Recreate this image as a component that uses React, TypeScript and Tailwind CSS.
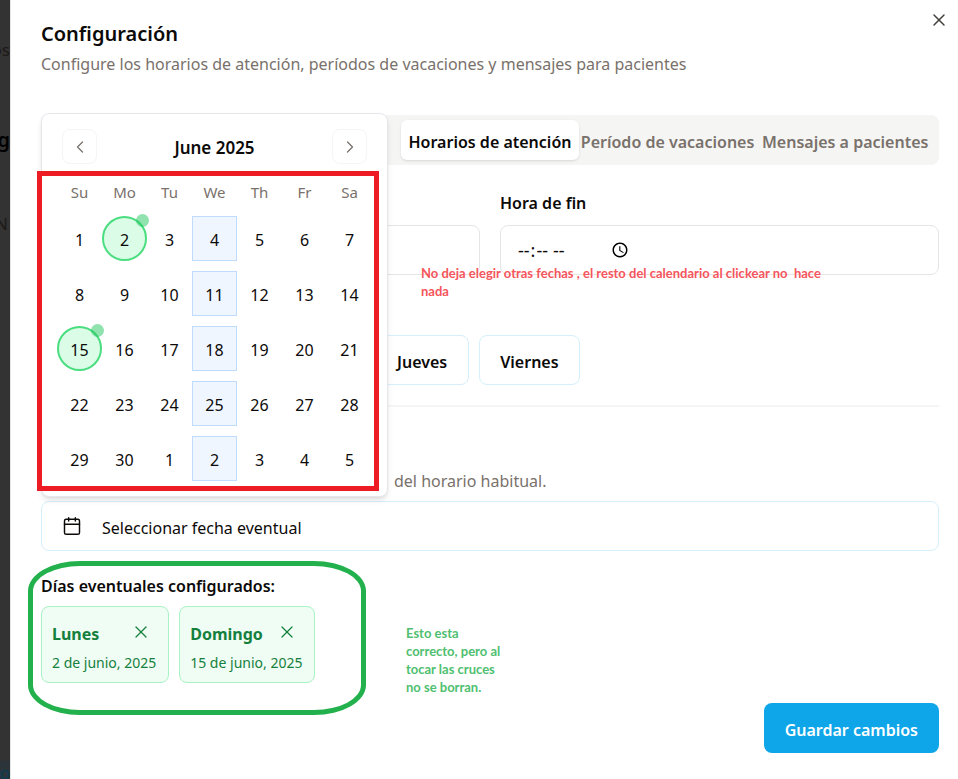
import type { ReactNode } from 'react';
import { Calendar, ChevronLeft, ChevronRight, X } from 'lucide-react';

const weekDays = ['Su', 'Mo', 'Tu', 'We', 'Th', 'Fr', 'Sa'];

const weeks = [
  [1, 2, 3, 4, 5, 6, 7],
  [8, 9, 10, 11, 12, 13, 14],
  [15, 16, 17, 18, 19, 20, 21],
  [22, 23, 24, 25, 26, 27, 28],
  [29, 30, 1, 2, 3, 4, 5],
];

const eventualDays = [
  { name: 'Lunes', date: '2 de junio, 2025' },
  { name: 'Domingo', date: '15 de junio, 2025' },
];

function DayButton({ day, week, column }: { day: number; week: number; column: number }) {
  const configured = (week === 0 && day === 2) || day === 15;
  const workday = column === 3;
  const look = configured
    ? 'rounded-full border-2 border-[#4ade80] bg-green-100'
    : workday
      ? 'border border-[#bfdbfe] bg-[#eff6ff]'
      : '';
  return (
    <button type="button" className={`relative flex h-[45px] w-full items-center justify-center pt-[2px] ${look}`}>
      {day}
      {configured && <span className="absolute -top-1 -right-1 size-[13px] rounded-full bg-[#22c55e]/50" />}
    </button>
  );
}

function MonthCalendar() {
  return (
    <div className="absolute top-[113px] left-[30px] z-10 w-[347px] rounded-lg border border-gray-200 bg-white p-[15px] shadow-md">
      <div className="flex items-center justify-between px-[5px]">
        <button type="button" aria-label="Previous month" className="flex size-[35px] items-center justify-center rounded-lg border border-stone-100 text-stone-500">
          <ChevronLeft size={20} strokeWidth={1.5} />
        </button>
        <h3 className="pt-[2px] text-[17px] leading-6 font-semibold">June 2025</h3>
        <button type="button" aria-label="Next month" className="flex size-[35px] items-center justify-center rounded-lg border border-stone-100 text-stone-500">
          <ChevronRight size={20} strokeWidth={1.5} />
        </button>
      </div>
      <table className="mt-4 block text-[16px]">
        <thead className="block">
          <tr className="flex">
            {weekDays.map((name) => (
              <th key={name} className="w-[45px] text-[15px] leading-6 font-normal text-stone-500">{name}</th>
            ))}
          </tr>
        </thead>
        <tbody className="block">
          {weeks.map((days, week) => (
            <tr key={week} className={week === 0 ? 'mt-3 flex' : 'mt-[10px] flex'}>
              {days.map((day, column) => (
                <td key={column} className="w-[45px]">
                  <DayButton day={day} week={week} column={column} />
                </td>
              ))}
            </tr>
          ))}
        </tbody>
      </table>
    </div>
  );
}

function Tab({ active, className, children }: { active?: boolean; className?: string; children: ReactNode }) {
  return (
    <button
      type="button"
      role="tab"
      aria-selected={!!active}
      className={`flex h-10 items-center justify-center rounded-md pt-1 whitespace-nowrap ${active ? 'bg-white text-stone-950 shadow-sm' : 'text-stone-500'} ${className ?? ''}`}
    >
      {children}
    </button>
  );
}

function Annotations() {
  return (
    <>
      <div className="pointer-events-none absolute top-[171px] left-[26px] z-20 h-[320px] w-[342px] border-[5px] border-[#ed1c24]" />
      <div className="pointer-events-none absolute top-[561px] left-[17px] z-20 h-[154px] w-[338px] rounded-[52px/30px] border-[5px] border-[#22b14c]" />
      <p className="absolute top-[264px] left-[410px] z-20 w-[424px] font-['Lato',sans-serif] text-[13px] leading-[18px] font-bold whitespace-pre-wrap text-[#f5555c]">
        No deja elegir otras fechas , el resto del calendario al clickear no  hace nada
      </p>
      <p className="absolute top-[624px] left-[395px] z-20 w-[104px] font-['Lato',sans-serif] text-[13px] leading-[18px] font-bold text-[#4fc070]">
        Esto esta <br />correcto, pero al tocar las cruces no se borran.
      </p>
    </>
  );
}

export default function App() {
  return (
    <div className="flex min-h-screen bg-[#333333] font-['Noto_Sans','Open_Sans',sans-serif] text-stone-950">
      <div aria-hidden="true" className="relative w-[10px] shrink-0 overflow-hidden text-[17px] leading-6 text-stone-900">
        <span className="absolute top-[38px] right-0">os</span>
        <span className="absolute top-[128px] right-0 text-[20px] font-semibold text-black">g</span>
        <span className="absolute top-[212px] right-[2px]">N</span>
        <span className="absolute right-0 bottom-0 flex h-[18px] w-[10px] justify-end bg-[#2b3439] text-[#0b3c54]">io</span>
      </div>
      <main className="relative min-w-0 flex-1 border-l border-stone-200 bg-white pt-5 pr-[19px] pb-[25px] pl-[30px]">
        <button type="button" aria-label="Cerrar" className="absolute top-[10px] right-[9px] flex size-5 items-center justify-center text-stone-700">
          <X size={20} strokeWidth={1.75} />
        </button>
        <h1 className="text-[20px] leading-7 font-semibold">Configuración</h1>
        <p className="mt-1 text-[16px] leading-6 text-stone-500">
          Configure los horarios de atención, períodos de vacaciones y mensajes para pacientes
        </p>

        <div role="tablist" className="mt-[39px] grid grid-cols-5 rounded-lg bg-stone-100 p-[5px] text-[16px] font-semibold">
          <Tab active className="col-start-3">Horarios de atención</Tab>
          <Tab>Período de vacaciones</Tab>
          <Tab>Mensajes a pacientes</Tab>
        </div>

        <div className="mt-[26px] grid grid-cols-2 items-end gap-5 text-[16px]">
          <input type="time" aria-label="Hora de inicio" className="flex h-[50px] w-full rounded-lg border border-stone-200 px-4 text-[18px]" />
          <div>
            <label htmlFor="end-time" className="block leading-6 font-semibold">Hora de fin</label>
            <input id="end-time" type="time" className="mt-[10px] flex h-[50px] w-full rounded-lg border border-stone-200 px-4 text-[18px]" />
          </div>
        </div>

        <div className="mt-[60px] ml-[334px] flex gap-[10px] text-[16px] font-semibold">
          <button type="button" className="h-[50px] rounded-lg border border-[#d5effc] px-[21px] pt-1">Jueves</button>
          <button type="button" className="h-[50px] rounded-lg border border-[#d5effc] px-5 pt-1">Viernes</button>
        </div>

        <hr className="mt-5 border-t-2 border-stone-100" />

        <p className="mt-[62px] ml-[353px] text-[16px] leading-6 text-stone-500">del horario habitual.</p>
        <button type="button" className="mt-2 flex h-[50px] w-full items-center gap-5 rounded-lg border border-[#d5effc] px-5 text-[16px]">
          <Calendar size={20} strokeWidth={1.75} />
          <span className="pt-1">Seleccionar fecha eventual</span>
        </button>

        <h2 className="mt-[23px] text-[16px] leading-6 font-semibold">Días eventuales configurados:</h2>
        <ul className="mt-2 flex gap-[10px] text-[#15803d]">
          {eventualDays.map(({ name, date }) => (
            <li key={name} className="rounded-lg border border-[#a7f3c3] bg-green-50 pt-[15px] pr-3 pb-[7px] pl-[10px]">
              <div className="flex items-start justify-between pr-[5px]">
                <span className="text-[16px] leading-6 font-bold">{name}</span>
                <button type="button" aria-label={`Eliminar ${name}`} className="flex size-5 items-center justify-center">
                  <X size={20} strokeWidth={1.5} />
                </button>
              </div>
              <p className="mt-[5px] text-[14px] leading-6">{date}</p>
            </li>
          ))}
        </ul>

        <div className="mt-5 flex justify-end">
          <button type="button" className="h-[50px] rounded-lg bg-[#0ea5e9] px-[21px] pt-1 text-[16px] font-semibold text-white">Guardar cambios</button>
        </div>

        <MonthCalendar />
        <Annotations />
      </main>
    </div>
  );
}
